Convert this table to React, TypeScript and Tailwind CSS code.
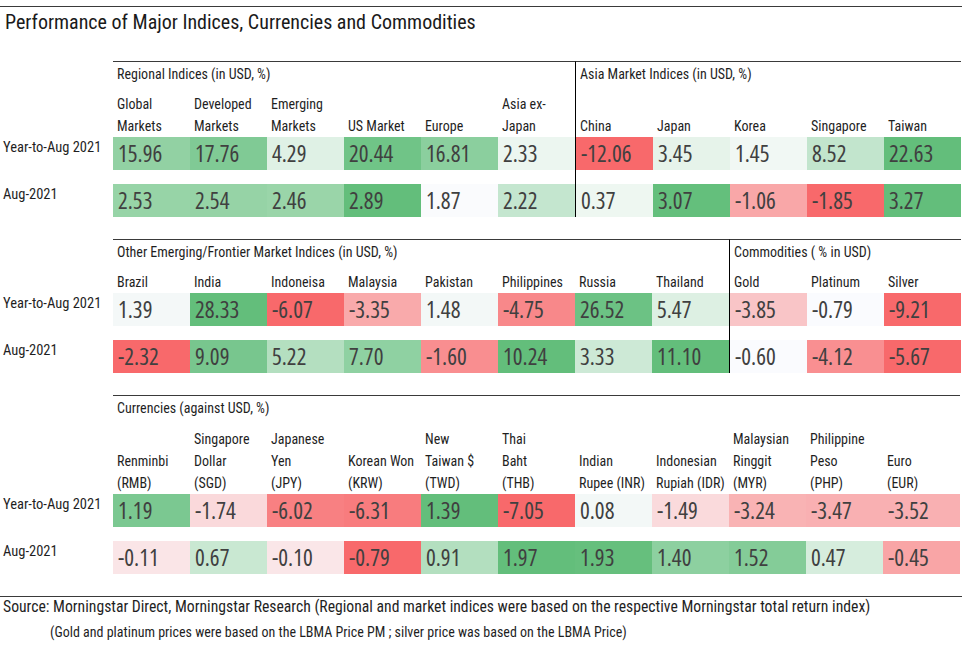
import React from "react";

type Col = { label: string[]; v: [string, string]; c: [string, string] };
type Group = { title: string; cols: Col[]; divider?: boolean };

const regional: Group[] = [
  {
    title: "Regional Indices (in USD, %)",
    cols: [
      { label: ["Global", "Markets"], v: ["15.96", "2.53"], c: ["bg-[#92d1a3]", "bg-[#97d4a7]"] },
      { label: ["Developed", "Markets"], v: ["17.76", "2.54"], c: ["bg-[#80ca95]", "bg-[#96d3a6]"] },
      { label: ["Emerging", "Markets"], v: ["4.29", "2.46"], c: ["bg-[#dff1e5]", "bg-[#9ad5a9]"] },
      { label: ["US Market"], v: ["20.44", "2.89"], c: ["bg-[#70c487]", "bg-[#63be7b]"] },
      { label: ["Europe"], v: ["16.81", "1.87"], c: ["bg-[#8bcf9e]", "bg-[#fafbfd]"] },
      { label: ["Asia ex-", "Japan"], v: ["2.33", "2.22"], c: ["bg-[#ecf6f0]", "bg-[#c4e6cf]"] },
    ],
  },
  {
    title: "Asia Market Indices (in USD, %)",
    divider: true,
    cols: [
      { label: ["China"], v: ["-12.06", "0.37"], c: ["bg-[#f8696b]", "bg-[#eef7f1]"] },
      { label: ["Japan"], v: ["3.45", "3.07"], c: ["bg-[#e6f3ea]", "bg-[#64bf7c]"] },
      { label: ["Korea"], v: ["1.45", "-1.06"], c: ["bg-[#f1f8f4]", "bg-[#f9a7a8]"] },
      { label: ["Singapore"], v: ["8.52", "-1.85"], c: ["bg-[#c2e5cd]", "bg-[#f8696b]"] },
      { label: ["Taiwan"], v: ["22.63", "3.27"], c: ["bg-[#63be7b]", "bg-[#63be7b]"] },
    ],
  },
];

const frontier: Group[] = [
  {
    title: "Other Emerging/Frontier Market Indices (in USD, %)",
    cols: [
      { label: ["Brazil"], v: ["1.39", "-2.32"], c: ["bg-[#f4f8f8]", "bg-[#f8696b]"] },
      { label: ["India"], v: ["28.33", "9.09"], c: ["bg-[#63be7b]", "bg-[#78c68e]"] },
      { label: ["Indoneisa"], v: ["-6.07", "5.22"], c: ["bg-[#f8696b]", "bg-[#b4dfc0]"] },
      { label: ["Malaysia"], v: ["-3.35", "7.70"], c: ["bg-[#f9aaab]", "bg-[#8fd1a2]"] },
      { label: ["Pakistan"], v: ["1.48", "-1.60"], c: ["bg-[#f3f8f7]", "bg-[#f98e90]"] },
      { label: ["Philippines"], v: ["-4.75", "10.24"], c: ["bg-[#f8888a]", "bg-[#63be7b]"] },
      { label: ["Russia"], v: ["26.52", "3.33"], c: ["bg-[#6cc284]", "bg-[#cde9d6]"] },
      { label: ["Thailand"], v: ["5.47", "11.10"], c: ["bg-[#ddf0e3]", "bg-[#63be7b]"] },
    ],
  },
  {
    title: "Commodities ( % in USD)",
    divider: true,
    cols: [
      { label: ["Gold"], v: ["-3.85", "-0.60"], c: ["bg-[#f9c5c7]", "bg-[#fafbfe]"] },
      { label: ["Platinum"], v: ["-0.79", "-4.12"], c: ["bg-[#fafbfe]", "bg-[#f98f91]"] },
      { label: ["Silver"], v: ["-9.21", "-5.67"], c: ["bg-[#f8696b]", "bg-[#f8696b]"] },
    ],
  },
];

const currencies: Group[] = [
  {
    title: "Currencies (against USD, %)",
    cols: [
      { label: ["Renminbi", "(RMB)"], v: ["1.19", "-0.11"], c: ["bg-[#7bc891]", "bg-[#fae5e7]"] },
      { label: ["Singapore", "Dollar", "(SGD)"], v: ["-1.74", "0.67"], c: ["bg-[#fad9db]", "bg-[#c9e8d2]"] },
      { label: ["Japanese", "Yen", "(JPY)"], v: ["-6.02", "-0.10"], c: ["bg-[#f88082]", "bg-[#fae6e8]"] },
      { label: ["Korean Won", "(KRW)"], v: ["-6.31", "-0.79"], c: ["bg-[#f87c7e]", "bg-[#f8696b]"] },
      { label: ["New", "Taiwan $", "(TWD)"], v: ["1.39", "0.91"], c: ["bg-[#63be7b]", "bg-[#b3dfbf]"] },
      { label: ["Thai", "Baht", "(THB)"], v: ["-7.05", "1.97"], c: ["bg-[#f8696b]", "bg-[#63be7b]"] },
      { label: ["Indian", "Rupee (INR)"], v: ["0.08", "1.93"], c: ["bg-[#f3f8f7]", "bg-[#66bf7d]"] },
      { label: ["Indonesian", "Rupiah (IDR)"], v: ["-1.49", "1.40"], c: ["bg-[#fadadc]", "bg-[#8dd0a0]"] },
      { label: ["Malaysian", "Ringgit", "(MYR)"], v: ["-3.24", "1.52"], c: ["bg-[#f9b3b4]", "bg-[#84cc98]"] },
      { label: ["Philippine", "Peso", "(PHP)"], v: ["-3.47", "0.47"], c: ["bg-[#f9b0b2]", "bg-[#d6eddd]"] },
      { label: ["Euro", "(EUR)"], v: ["-3.52", "-0.45"], c: ["bg-[#f9b0b2]", "bg-[#f9a5a6]"] },
    ],
  },
];

function ValueRow({ cols, row }: { cols: Col[]; row: 0 | 1 }) {
  return (
    <div className="flex">
      {cols.map((col) => (
        <div
          key={col.label.join(" ")}
          className={`w-[77px] h-[33px] pl-[5px] font-['Open_Sans','Roboto_Condensed',sans-serif] [font-stretch:75%] text-[23px] leading-[33px] text-[#404040] ${col.c[row]}`}
        >
          {col.v[row]}
        </div>
      ))}
    </div>
  );
}

function Section({ groups, labelsH }: { groups: Group[]; labelsH: string }) {
  return (
    <div className="flex">
      <div className="w-[113px] shrink-0 flex flex-col text-[14.5px] leading-[22px] text-[#1f1f1f]">
        <div className="h-[25px]" />
        <div className={labelsH} />
        <div className="h-[33px] pl-[3px] whitespace-nowrap">Year-to-Aug 2021</div>
        <div className="h-[14px]" />
        <div className="h-[33px] pl-[3px]">Aug-2021</div>
      </div>
      {groups.map((g) => (
        <div
          key={g.title}
          className={`flex flex-col border-t border-[#3a3a3a] ${g.divider ? "border-l border-l-black" : ""}`}
        >
          <div className="h-[24px] pl-[4px] text-[14px] leading-[24px] whitespace-nowrap text-[#1f1f1f]">
            {g.title}
          </div>
          <div className={`flex ${labelsH}`}>
            {g.cols.map((col) => (
              <div
                key={col.label.join(" ")}
                className="w-[77px] flex flex-col justify-end pl-[4px] text-[14px] leading-[22px] whitespace-nowrap text-[#1f1f1f]"
              >
                {col.label.map((l) => (
                  <div key={l}>{l}</div>
                ))}
              </div>
            ))}
          </div>
          <ValueRow cols={g.cols} row={0} />
          <div className="h-[14px]" />
          <ValueRow cols={g.cols} row={1} />
        </div>
      ))}
    </div>
  );
}

export default function App() {
  return (
    <div className="w-[977px] h-[656px] bg-white pt-[6px] font-['Roboto_Condensed','Liberation_Sans',sans-serif]">
      <div className="w-[962px]">
        <div className="border-t border-[#3a3a3a] pl-[5px] text-[20px] leading-[30px] text-[#1a1a1a]">
          Performance of Major Indices, Currencies and Commodities
        </div>
        <div className="mt-[24px]">
          <Section groups={regional} labelsH="h-[51px]" />
        </div>
        <div className="mt-[22px]">
          <Section groups={frontier} labelsH="h-[29px]" />
        </div>
        <div className="mt-[22px]">
          <Section groups={currencies} labelsH="h-[74px]" />
        </div>
        <div className="mt-[22px] border-t border-[#3a3a3a] leading-[20px] text-[#1f1f1f]">
          <div className="pl-[3px] text-[15.7px] whitespace-nowrap">
            Source: Morningstar Direct, Morningstar Research (Regional and market indices were based on the respective Morningstar total return index)
          </div>
          <div className="mt-[5px] pl-[50px] text-[14px] whitespace-nowrap">
            (Gold and platinum prices were based on the LBMA Price PM ; silver price was based on the LBMA Price)
          </div>
        </div>
      </div>
    </div>
  );
}
